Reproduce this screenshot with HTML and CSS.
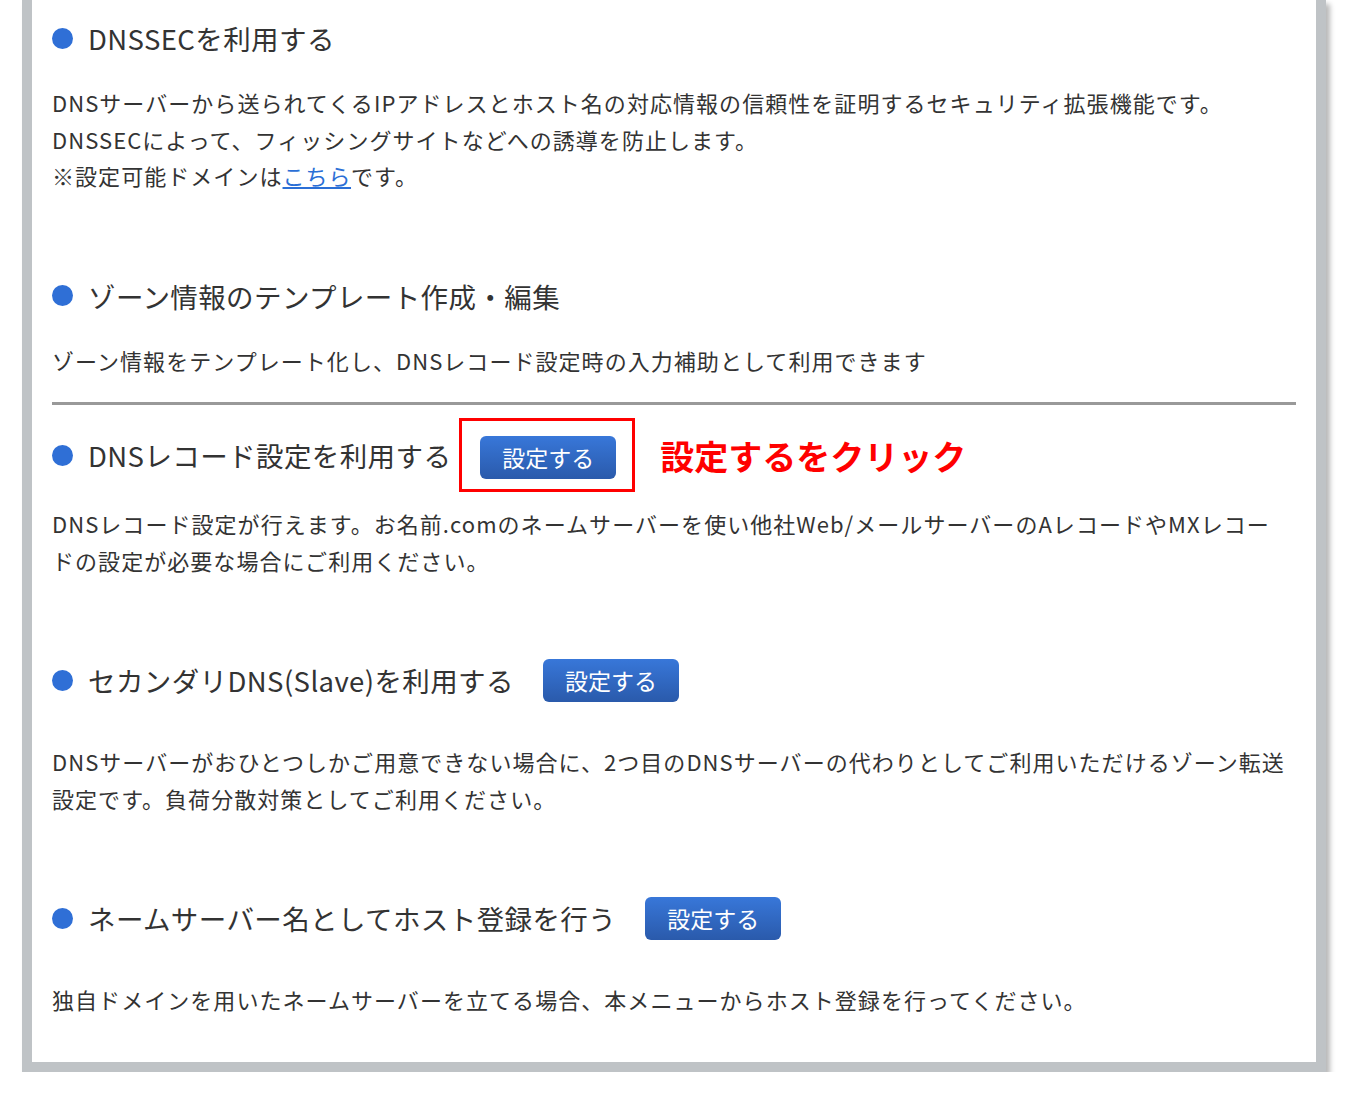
FILE: index.html
```html
<!DOCTYPE html>
<html lang="ja">
<head>
  <meta charset="UTF-8" />
  <meta name="viewport" content="width=device-width, initial-scale=1">
  <title>DNS関連機能設定</title>
  <link rel="stylesheet" href="styles.css">
</head>
<body>

  <div class="panel">

    <div class="section">
      <h2 class="item-title">DNSSECを利用する</h2>
      <p class="item-text">
        DNSサーバーから送られてくるIPアドレスとホスト名の対応情報の信頼性を証明するセキュリティ拡張機能です。<br>
        DNSSECによって、フィッシングサイトなどへの誘導を防止します。<br>
        ※設定可能ドメインは<a href="#">こちら</a>です。
      </p>
    </div>

    <div class="section section-ruled">
      <h2 class="item-title">ゾーン情報のテンプレート作成・編集</h2>
      <p class="item-text">ゾーン情報をテンプレート化し、DNSレコード設定時の入力補助として利用できます</p>
    </div>

    <hr class="divider">

    <div class="section section-marked">
      <div class="item-head">
        <h2 class="item-title">DNSレコード設定を利用する</h2>
        <span class="mark-box"><a class="btn" href="#">設定する</a></span>
        <span class="mark-note">設定するをクリック</span>
      </div>
      <p class="item-text">DNSレコード設定が行えます。お名前.comのネームサーバーを使い他社Web/メールサーバーのAレコードやMXレコードの設定が必要な場合にご利用ください。</p>
    </div>

    <div class="section section-btn">
      <div class="item-head">
        <h2 class="item-title">セカンダリDNS(Slave)を利用する</h2>
        <a class="btn" href="#">設定する</a>
      </div>
      <p class="item-text">DNSサーバーがおひとつしかご用意できない場合に、2つ目のDNSサーバーの代わりとしてご利用いただけるゾーン転送設定です。負荷分散対策としてご利用ください。</p>
    </div>

    <div class="section section-btn">
      <div class="item-head">
        <h2 class="item-title">ネームサーバー名としてホスト登録を行う</h2>
        <a class="btn" href="#">設定する</a>
      </div>
      <p class="item-text">独自ドメインを用いたネームサーバーを立てる場合、本メニューからホスト登録を行ってください。</p>
    </div>

  </div>

</body>
</html>
```

FILE: styles.css
```css
body {
  margin: 0;
  background: #fff;
  font-family: "Noto Sans CJK JP", "Noto Sans", sans-serif;
  color: #333;
}
.panel {
  box-sizing: border-box;
  width: 1304px;
  margin-left: 22px;
  padding: 16px 20px 44px;
  background: #fff;
  border: 10px solid #bfc3c6;
  border-top: 0;
  box-shadow: 4px 4px 5px rgba(0, 0, 0, 0.28);
}
.section {
  margin-bottom: 80px;
}
.section:last-child,
.section-ruled {
  margin-bottom: 0;
}
.item-head {
  display: flex;
  align-items: center;
}
.item-title {
  display: flex;
  align-items: center;
  margin: 0;
  font-size: 27.5px;
  font-weight: normal;
  letter-spacing: 0.4px;
  line-height: 44px;
  color: #333;
}
.item-title::before {
  content: "";
  width: 21px;
  height: 21px;
  margin-right: 15px;
  border-radius: 50%;
  background: #2f6fd6;
  flex-shrink: 0;
}
.item-text {
  margin: 24px 8px 0 0;
  font-size: 22px;
  letter-spacing: 1.05px;
  line-height: 36.5px;
  color: #333;
}
.item-text a {
  color: #2b6fd6;
}
.divider {
  margin: 24px 0 0;
  border: 0;
  height: 3px;
  background: #999;
}
.section-marked {
  margin-top: 13px;
}
.section-marked .item-text {
  margin-top: 13px;
}
.section-btn .item-text {
  margin-top: 41px;
}
.btn {
  display: inline-block;
  box-sizing: border-box;
  width: 136px;
  height: 43px;
  margin-left: 29px;
  border-radius: 6px;
  background: linear-gradient(#3877d9, #2a5aab);
  color: #fff;
  font-size: 23px;
  line-height: 43px;
  text-align: center;
  text-decoration: none;
}
.mark-box {
  display: inline-block;
  margin-left: 8px;
  padding: 15px 16px 10px 18px;
  border: 3px solid #f00;
}
.mark-box .btn {
  margin-left: 0;
  display: block;
}
.mark-note {
  margin-left: 25px;
  color: #f00;
  font-size: 34px;
  font-weight: bold;
}
```
